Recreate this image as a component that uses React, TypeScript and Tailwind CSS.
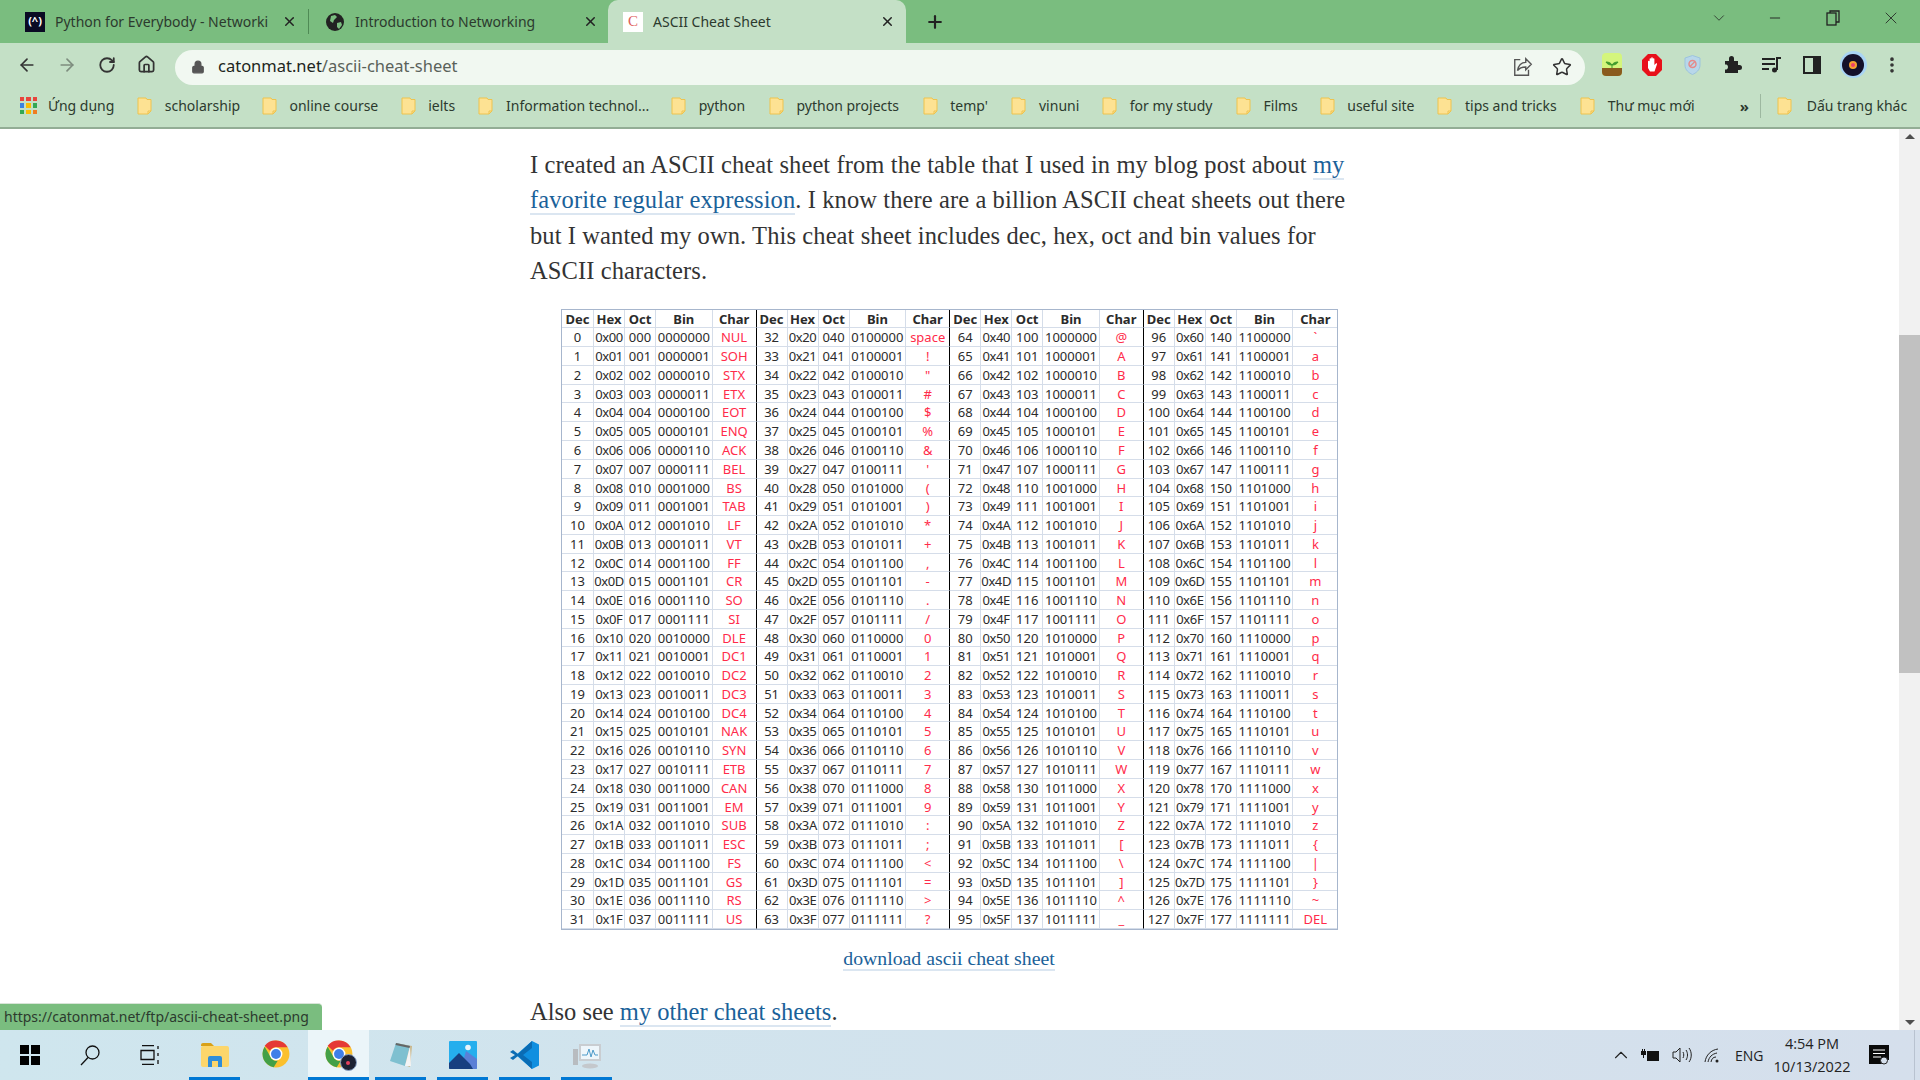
import React from "react";
import { ArrowLeft, ArrowRight, RotateCw, Home, Lock, Star, Plus, X, Minus, ChevronDown, ChevronUp, EllipsisVertical } from "lucide-react";

const controlNames = ["NUL","SOH","STX","ETX","EOT","ENQ","ACK","BEL","BS","TAB","LF","VT","FF","CR","SO","SI","DLE","DC1","DC2","DC3","DC4","NAK","SYN","ETB","CAN","EM","SUB","ESC","FS","GS","RS","US"];
const headers = ["Dec", "Hex", "Oct", "Bin", "Char"];

const charFor = (n: number) => {
  if (n < 32) return controlNames[n];
  if (n === 32) return "space";
  if (n === 127) return "DEL";
  return String.fromCharCode(n);
};

const bookmarks = [
  { name: "scholarship", cls: "w-[74px]" },
  { name: "online course", cls: "w-[88px]" },
  { name: "ielts", cls: "w-[27px]" },
  { name: "Information technol...", cls: "w-[142px]" },
  { name: "python", cls: "w-[47px]" },
  { name: "python projects", cls: "w-[103px]" },
  { name: "temp'", cls: "w-[38px]" },
  { name: "vinuni", cls: "w-[40px]" },
  { name: "for my study", cls: "w-[83px]" },
  { name: "Films", cls: "w-[33px]" },
  { name: "useful site", cls: "w-[67px]" },
  { name: "tips and tricks", cls: "w-[92px]" },
  { name: "Thư mục mới", cls: "w-[87px]" },
];

const Folder = () => (
  <svg width="15" height="18" viewBox="0 0 15 18" className="shrink-0">
    <path d="M1 1h8l1 1.500h4V14l-3 3H1z" fill="#fde293" stroke="#eec34e" strokeWidth="1" />
    <path d="M11 17v-3h3" fill="none" stroke="#eec34e" strokeWidth="1" />
  </svg>
);

const ChromeLogo = ({ size = 28 }: { size?: number }) => (
  <svg width={size} height={size} viewBox="0 0 48 48" className="shrink-0">
    <circle cx="24" cy="24" r="23" fill="#fbc02d" />
    <path d="M24 1a23 23 0 0 1 20 11.500H24a12 12 0 0 0-10.400 6L4.600 10A23 23 0 0 1 24 1z" fill="#e53935" />
    <path d="M4.600 11.500L14 28a11.500 11.500 0 0 0 13 7.500L20 46.700A23 23 0 0 1 4.600 11.500z" fill="#43a047" />
    <circle cx="24" cy="24" r="11" fill="#fff" />
    <circle cx="24" cy="24" r="8.500" fill="#3f7fe8" />
  </svg>
);

const App = () => {
  return (
    <div className="w-[1920px] h-[1080px] overflow-hidden flex flex-col relative bg-white font-['Noto_Sans',sans-serif]">
      {/* tab strip */}
      <div className="h-[43px] bg-[#7abd7f] flex items-center shrink-0 pl-[12px] text-[14px] text-[#2c3a2e]">
        <div className="w-[297px] h-[43px] flex items-center pl-[13px]">
          <div className="w-[20px] h-[20px] bg-[#0a0a23] flex items-center justify-center text-white text-[11px] font-bold shrink-0">(^)</div>
          <span className="ml-[10px] w-[219px] whitespace-nowrap">Python for Everybody - Networki</span>
          <X size={15} strokeWidth={2.4} className="ml-[8px] text-[#222]" />
          <div className="w-px h-[25px] bg-[#4f8a55] ml-auto" />
        </div>
        <div className="w-[299px] h-[43px] flex items-center pl-[17px]">
          <svg width="18" height="18" viewBox="0 0 18 18" className="shrink-0">
            <circle cx="9" cy="9" r="9" fill="#222" />
            <path d="M5 3l4-1 2 2-3 3-1 3-3-2zM11 10l4-1 1 3-3 4-2-2z" fill="#7abd7f" />
          </svg>
          <span className="ml-[11px] w-[228px] whitespace-nowrap">Introduction to Networking</span>
          <X size={15} strokeWidth={2.4} className="text-[#222]" />
        </div>
        <div className="w-[298px] h-[43px] flex items-center pl-[15px] bg-[#c4e0c6] rounded-t-[10px]">
          <div className="w-[20px] h-[20px] bg-white flex items-center justify-center text-[#e0605a] text-[15px] font-['Liberation_Serif',serif] shrink-0">C</div>
          <span className="ml-[10px] w-[227px] whitespace-nowrap">ASCII Cheat Sheet</span>
          <X size={15} strokeWidth={2.4} className="text-[#222]" />
        </div>
        <div className="w-[58px] h-[43px] flex items-center justify-center">
          <Plus size={20} strokeWidth={2.6} className="text-[#222]" />
        </div>
        <div className="flex-1 h-[43px] flex justify-end pb-[7px] items-center text-[#222]">
          <div className="w-[58px] flex justify-center pl-[3px]"><ChevronDown size={18} strokeWidth={1} /></div>
          <div className="w-[58px] flex justify-center"><Minus size={16} strokeWidth={1.4} /></div>
          <div className="w-[58px] flex justify-center">
            <svg width="14" height="16" viewBox="0 0 14 16" fill="none" stroke="#222" strokeWidth="1.300">
              <rect x="1" y="3" width="9" height="12" />
              <path d="M4 3V1h9v11h-3" />
            </svg>
          </div>
          <div className="w-[58px] flex justify-center"><X size={20} strokeWidth={1} /></div>
        </div>
      </div>

      {/* toolbar */}
      <div className="h-[43px] bg-[#c4e0c6] flex items-center shrink-0 pl-[7px]">
        <div className="w-[40px] flex justify-center"><ArrowLeft size={20} className="text-[#333]" /></div>
        <div className="w-[40px] flex justify-center"><ArrowRight size={20} className="text-[#7d8c7e]" /></div>
        <div className="w-[40px] flex justify-center"><RotateCw size={18} strokeWidth={2.4} className="text-[#333]" /></div>
        <div className="w-[38px] flex justify-center"><Home size={19} strokeWidth={2.2} className="text-[#333]" /></div>
        <div className="w-[1410px] h-[35px] ml-[10px] mt-[5px] rounded-full bg-[#f1f8f1] flex items-center pl-[16px]">
          <Lock size={14} fill="#555" className="text-[#555]" />
          <span className="ml-[13px] text-[16.500px] leading-[22px] mb-[2px] text-[#202520]">catonmat.net<span className="text-[#5a625a]">/ascii-cheat-sheet</span></span>
          <div className="ml-auto flex items-center">
            <svg width="22" height="22" viewBox="0 0 24 24" fill="none" stroke="#555" strokeWidth="1.500">
              <path d="M9 4H3v17h15v-6" />
              <path d="M21 9l-6-6v4c-5 0-8 3-9 9 2-3 5-4 9-4v3z" />
            </svg>
            <Star size={20} strokeWidth={1.800} className="text-[#333] ml-[18px] mr-[13px]" />
          </div>
        </div>
        <div className="flex items-center ml-[7px]">
          {/* forest */}
          <div className="w-[40px] flex justify-center">
            <svg width="20" height="23" viewBox="0 0 20 23">
              <rect width="20" height="23" rx="4" fill="#d4f57c" />
              <path d="M0 15h20v4a4 4 0 0 1-4 4H4a4 4 0 0 1-4-4z" fill="#8a5a1e" />
              <path d="M10 15v-4M10 12c-1-2-3-3-6-3 1 2 3 3 6 3zM10 12c1-2 3-3 6-3-1 2-3 3-6 3z" fill="#3f9a2c" stroke="#3f9a2c" strokeWidth="1" />
            </svg>
          </div>
          {/* adblock */}
          <div className="w-[40px] flex justify-center">
            <svg width="22" height="24" viewBox="0 0 22 24">
              <path d="M7 1h8l6 6v10l-6 6H7l-6-6V7z" fill="#e8101a" />
              <path d="M7 12V8.500a.800.800 0 0 1 1.600 0V6a.800.800 0 0 1 1.600 0V5a.800.800 0 0 1 1.600 0v1a.800.800 0 0 1 1.600 0v6l1.500-1.500c.800-.500 1.500.300 1 1L13.500 18.500H9L7 15z" fill="#fff" />
            </svg>
          </div>
          {/* shield */}
          <div className="w-[40px] flex justify-center">
            <svg width="17" height="20" viewBox="0 0 17 20">
              <path d="M8.500 0.500L16 3v7c0 5-4 8-7.500 9.500C5 18 1 15 1 10V3z" fill="#b8d7ea" stroke="#9cc3dd" />
              <circle cx="8.500" cy="9" r="3.500" fill="none" stroke="#e58a8a" strokeWidth="1.500" />
              <path d="M6 11.500l5-5" stroke="#e58a8a" strokeWidth="1.200" />
            </svg>
          </div>
          {/* extensions */}
          <div className="w-[40px] flex justify-center">
            <svg width="19" height="19" viewBox="0 0 19 19" fill="#222">
              <path d="M2 6h4V3.500a2.500 2.500 0 0 1 5 0V6h4v4h1.500a2.500 2.500 0 0 1 0 5H15v3H2v-3.500h1.500a2.800 2.800 0 0 0 0-5H2z" />
            </svg>
          </div>
          {/* media */}
          <div className="w-[40px] flex justify-center">
            <svg width="20" height="16" viewBox="0 0 20 16" fill="none" stroke="#222" strokeWidth="2">
              <path d="M0 2h13M0 7h13M0 12h7" />
              <path d="M15 13V1h4" />
              <circle cx="12.500" cy="13" r="2.500" fill="#222" stroke="none" />
            </svg>
          </div>
          {/* side panel */}
          <div className="w-[40px] flex justify-center">
            <div className="w-[18px] h-[18px] border-[2px] border-r-[8px] border-[#222]" />
          </div>
          {/* avatar */}
          <div className="w-[42px] flex justify-center">
            <div className="w-[27px] h-[27px] rounded-full bg-[#a9d4f5] flex items-center justify-center">
              <div className="w-[22px] h-[22px] rounded-full bg-[#14102a] flex items-center justify-center">
                <div className="w-[8px] h-[8px] rounded-full bg-[#f0406a] border-2 border-[#f5a030]" />
              </div>
            </div>
          </div>
          <div className="w-[36px] flex justify-center"><EllipsisVertical size={20} strokeWidth={2.4} className="text-[#333]" /></div>
        </div>
      </div>

      {/* bookmarks bar */}
      <div className="h-[43px] bg-[#c4e0c6] border-b-2 border-[#93ad95] flex items-center shrink-0 text-[14px] leading-[20px] text-[#2c3a2e] pl-[20px] pb-[2px]">
        <div className="w-[17px] h-[17px] grid grid-cols-3 gap-[2px] shrink-0">
          <i className="bg-[#e8453c]" /><i className="bg-[#e8453c]" /><i className="bg-[#e8453c]" />
          <i className="bg-[#3b82e0]" /><i className="bg-[#fbbc05]" /><i className="bg-[#34a853]" />
          <i className="bg-[#34a853]" /><i className="bg-[#fbbc05]" /><i className="bg-[#ef7d22]" />
        </div>
        <span className="ml-[11px] w-[66px] whitespace-nowrap">Ứng dụng</span>
        {bookmarks.map((b) => (
          <div key={b.name} className="flex items-center ml-[23px]">
            <Folder />
            <span className={"ml-[12.750px] whitespace-nowrap " + b.cls}>{b.name}</span>
          </div>
        ))}
        <span className="ml-[45px] text-[15px] font-bold w-[14px]">»</span>
        <div className="w-px h-[24px] bg-[#9db8a0] ml-[6px]" />
        <div className="flex items-center ml-[16px]">
          <Folder />
          <span className="ml-[15px] whitespace-nowrap">Dấu trang khác</span>
        </div>
      </div>

      {/* page + scrollbar */}
      <div className="flex-1 flex min-h-0">
        <div className="flex-1 min-w-0 pl-[530px] pt-[18px] font-['Liberation_Serif',serif] text-[#333]">
          <div className="w-[838px]">
            <p className="text-[24.500px] leading-[35.400px] whitespace-nowrap tracking-[0.1px]">
              I created an ASCII cheat sheet from the table that I used in my blog post about <a className="text-[#1a6199] border-b-2 border-[#dbe6f1]">my<br />favorite regular expression</a>. I know there are a billion ASCII cheat sheets out there<br />
              but I wanted my own. This cheat sheet includes dec, hex, oct and bin values for<br />
              ASCII characters.
            </p>

            {/* ascii table */}
            <div className="w-[777px] ml-[31px] mt-[20px] border border-[#a7b6cd] grid grid-cols-[32px_31px_31px_56.600px_44px_repeat(3,31px_31px_31px_56.600px_44px)] auto-rows-[18.780px] font-['Noto_Sans',sans-serif] text-[13px] leading-[18px] text-[#2b2b2b] text-center">
              {[0, 1, 2, 3].map((b) =>
                headers.map((h) => (
                  <div key={b + h} className={"font-bold border-b border-[#d5dde9] " + (h === "Char" ? (b < 3 ? "border-r border-r-black" : "") : "border-r")}>{h}</div>
                ))
              )}
              {Array.from({ length: 32 }, (_, r) =>
                [0, 1, 2, 3].map((b) => {
                  const n = b * 32 + r;
                  return (
                    <React.Fragment key={n}>
                      <div className="border-r border-b border-[#d5dde9]">{n}</div>
                      <div className="border-r border-b border-[#d5dde9] whitespace-nowrap tracking-[-0.4px]">{"0x" + n.toString(16).toUpperCase().padStart(2, "0")}</div>
                      <div className="border-r border-b border-[#d5dde9]">{n.toString(8).padStart(3, "0")}</div>
                      <div className="border-r border-b border-[#d5dde9]">{n.toString(2).padStart(7, "0")}</div>
                      <div className={"border-b border-[#d5dde9] text-[#ff2b4a] " + (b < 3 ? "border-r border-r-black" : "")}>{charFor(n)}</div>
                    </React.Fragment>
                  );
                })
              )}
            </div>

            <div className="mt-[13px] text-center w-[838px] text-[19.800px] leading-[30px]">
              <a className="text-[#1a6199] border-b-2 border-[#dbe6f1]">download ascii cheat sheet</a>
            </div>
            <p className="mt-[21.500px] text-[24.500px] leading-[35.400px]">
              Also see <a className="text-[#1a6199] border-b-2 border-[#dbe6f1]">my other cheat sheets</a>.
            </p>
          </div>
        </div>

        {/* scrollbar */}
        <div className="w-[21px] bg-[#f1f1f1] flex flex-col items-center shrink-0 pt-[5px] pb-[5px]">
          <div className="w-0 h-0 border-x-[5px] border-x-transparent border-b-[5px] border-b-[#505050]" />
          <div className="w-full h-[338px] bg-[#c1c1c1] mt-[196px]" />
          <div className="w-0 h-0 border-x-[5px] border-x-transparent border-t-[5px] border-t-[#505050] mt-auto" />
        </div>
      </div>

      {/* link status bubble */}
      <div className="absolute left-0 top-[1003px] h-[27px] w-[322px] bg-[#7abd7f] rounded-tr-[4px] border-t border-[#d8e4d8] pl-[4px] text-[14px] leading-[26px] text-[#2c3a2e] whitespace-nowrap">
        https://catonmat.net/ftp/ascii-cheat-sheet.png
      </div>

      {/* taskbar */}
      <div className="h-[50px] shrink-0 bg-gradient-to-r from-[#cfe6ee] to-[#d5dfec] flex items-stretch">
        <div className="w-[60px] flex items-center justify-center">
          <div className="w-[20px] h-[20px] grid grid-cols-2 gap-[1.500px]">
            <i className="bg-black" /><i className="bg-black" /><i className="bg-black" /><i className="bg-black" />
          </div>
        </div>
        <div className="w-[60px] flex items-center justify-center">
          <svg width="20" height="21" viewBox="0 0 20 21" fill="none" stroke="#111" strokeWidth="1.300">
            <circle cx="12.500" cy="7.500" r="6.500" />
            <path d="M8 12.500L1 20" />
          </svg>
        </div>
        <div className="w-[60px] flex items-center justify-center">
          <svg width="20" height="20" viewBox="0 0 20 20" fill="none" stroke="#111" strokeWidth="1.300">
            <path d="M2 0.500h12M2 19.500h12M1 5.500h13v9H1zM18 1v3M18 8v3M18 15v4" />
          </svg>
        </div>
        <div className="w-[9px]" />
        {/* explorer */}
        <div className="w-[51px] flex items-center justify-center border-b-[3px] border-[#0078d4] pt-[2px]">
          <svg width="29" height="28" viewBox="0 0 29 28">
            <path d="M1 4a2 2 0 0 1 2-2h8l3 3H1z" fill="#d9a118" />
            <rect x="1" y="5" width="28" height="21" rx="2" fill="#fcd66b" />
            <path d="M8 26v-9a2 2 0 0 1 2-2h10a2 2 0 0 1 2 2v9h-4v-6h-6v6z" fill="#2f8dd8" />
          </svg>
        </div>
        <div className="w-[68px] flex items-center justify-center pt-[1px] pb-[3px] pl-[3px]"><ChromeLogo size={28} /></div>
        {/* chrome profile, active */}
        <div className="w-[61px] flex items-center justify-center bg-[#ebf5f9] border-b-[3px] border-[#0078d4] pt-[1px]">
          <div className="relative w-[28px] h-[28px]">
            <ChromeLogo size={28} />
            <div className="absolute -right-[4px] -bottom-[3px] w-[17px] h-[17px] rounded-full bg-[#1d2233] border border-[#8aa4c8] flex items-center justify-center">
              <div className="w-[4px] h-[4px] rounded-full bg-[#e5405e]" />
            </div>
          </div>
        </div>
        <div className="w-[6px]" />
        {/* notepad */}
        <div className="w-[51px] flex items-center justify-center border-b-[3px] border-[#0078d4] pt-[2px]">
          <svg width="28" height="28" viewBox="0 0 28 28">
            <path d="M9 2l16 3-2 21-3-1z" fill="#c9b68a" />
            <path d="M9 2l14 3-5 20L3 20z" fill="#7fc0d0" />
            <path d="M18 25l5-20 1 20z" fill="#f4f4f4" />
            <path d="M9 2l14 3-.500 2L8.500 4z" fill="#666" />
          </svg>
        </div>
        <div className="w-[11px]" />
        {/* photos */}
        <div className="w-[51px] flex items-center justify-center border-b-[3px] border-[#0078d4] pt-[2px]">
          <svg width="28" height="28" viewBox="0 0 28 28">
            <rect width="28" height="28" rx="1" fill="#25aeed" />
            <circle cx="19" cy="6.500" r="2.800" fill="#e8f4fb" />
            <path d="M17 10l11 8v9a1 1 0 0 1-1 1H12z" fill="#5a7fd6" />
            <path d="M0 22l10-10 11 11 3 5H1a1 1 0 0 1-1-1z" fill="#173f80" />
          </svg>
        </div>
        <div className="w-[11px]" />
        {/* vs code */}
        <div className="w-[51px] flex items-center justify-center border-b-[3px] border-[#0078d4] pt-[2px]">
          <svg width="30" height="30" viewBox="0 0 30 30">
            <path d="M22 1l7 3.500v21L22 29 6 15z" fill="#0f8fe0" />
            <path d="M22 1L8 14l-5-4-3 2 5 3-5 3 3 2 5-4 14 13V22l-9-7 9-7z" fill="#0a6cb4" />
          </svg>
        </div>
        <div className="w-[11px]" />
        {/* resource monitor */}
        <div className="w-[51px] flex items-center justify-center border-b-[3px] border-[#0078d4] pt-[2px]">
          <svg width="28" height="28" viewBox="0 0 28 28">
            <path d="M6 3h22v17H6z" fill="#c9cdd1" />
            <path d="M8 5h18v13H8z" fill="#eef6fb" />
            <path d="M9 14h5l2-6 2 8 2-7 2 5h3" fill="none" stroke="#4c9ac9" strokeWidth="1" />
            <path d="M0 8h5v16H0z" fill="#b8bcc0" />
            <ellipse cx="17" cy="25" rx="8" ry="2.500" fill="#c4c8cc" />
          </svg>
        </div>

        {/* tray */}
        <div className="flex-1 flex items-center justify-end border-r border-[#b8c2d0] mr-[5px] pr-[25px] text-[#222]">
          <ChevronUp size={22} strokeWidth={1.2} className="mr-[8px]" />
          <svg width="20" height="13" viewBox="0 0 20 13" className="mr-[12px]">
            <path d="M1 2h1V0h1v2h1V0h1v2h1v4H4v3H3V6H1z" fill="#111" />
            <rect x="7" y="2" width="12" height="10" fill="#111" />
          </svg>
          <svg width="20" height="16" viewBox="0 0 20 16" fill="none" stroke="#222" strokeWidth="1" className="mr-[12px]">
            <path d="M1 5h3l4-4v14l-4-4H1zM11 5c1 2 1 4 0 6M14 3c2 3 2 7 0 10M17 1c3 4 3 10 0 14" />
          </svg>
          <svg width="16" height="15" viewBox="0 0 16 15" fill="none" stroke="#222" strokeWidth="1" className="mr-[15px]">
            <path d="M1 14C2 7 7 2 14 1M4 14c1-5 4-8 9-9M7 14c.500-3 2-5 5-5" />
            <circle cx="13" cy="13" r="1.500" fill="#222" stroke="none" />
          </svg>
          <span className="text-[14px] w-[32px] font-['Open_Sans',sans-serif]">ENG</span>
          <div className="w-[90px] text-center text-[14.500px] leading-[23px] mr-[12px] font-['Open_Sans',sans-serif]">
            <div>4:54 PM</div>
            <div>10/13/2022</div>
          </div>
          <svg width="20" height="20" viewBox="0 0 20 20">
            <path d="M0 0h20v15l-4 0-2 4H0z" fill="#0a0a0a" />
            <path d="M4 5h12M4 8.500h12M4 12h8" stroke="#fff" strokeWidth="1" />
            <circle cx="15" cy="15.500" r="3.500" fill="#d5dfec" stroke="#222" strokeWidth="1" />
          </svg>
        </div>
      </div>
    </div>
  );
};

export default App;
